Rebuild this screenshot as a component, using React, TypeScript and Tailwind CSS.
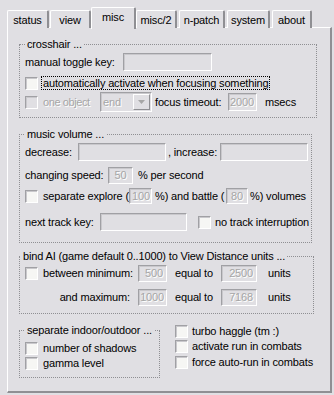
import React from 'react'

type BoxProps = { className?: string; value?: string }

// sunken, disabled-looking edit box
const Edit = ({ className = '', value = '' }: BoxProps) => (
  <div
    className={`shrink-0 border border-t-[#a0a0a4] border-l-[#a0a0a4] border-r-white border-b-white shadow-[inset_1px_1px_0_#c9c8cc] bg-[#e0dfe3] flex items-center ${className}`}
  >
    <span className="w-full text-[#a6a6a6] [text-shadow:1px_1px_0_#fff]">{value}</span>
  </div>
)

const Check = ({ disabled = false }: { disabled?: boolean }) => (
  <div
    className={`shrink-0 w-[13px] h-[13px] border border-t-[#a0a0a4] border-l-[#a0a0a4] border-r-white border-b-white shadow-[inset_1px_1px_0_#c9c8cc] ${disabled ? 'bg-[#e0dfe3]' : 'bg-[#f6f6f4]'}`}
  />
)

const Combo = () => (
  <div className="shrink-0 w-[52px] h-[20px] border border-t-[#a0a0a4] border-l-[#a0a0a4] border-r-white border-b-white shadow-[inset_1px_1px_0_#c9c8cc] flex items-center justify-between pl-[2px] pr-[1px]">
    <span className="text-[#a6a6a6] [text-shadow:1px_1px_0_#fff]">end</span>
    <div className="w-[17px] h-[16px] border border-t-white border-l-white border-r-[#8f8f93] border-b-[#8f8f93] bg-[#e0dfe3] flex items-center justify-center">
      <svg width="7" height="4" viewBox="0 0 7 4">
        <path d="M0 0h7L3.5 4z" fill="#a6a6a6" />
      </svg>
    </div>
  </div>
)

const tabs = [
  { label: 'status', cls: 'ml-[7px] w-[42px]' },
  { label: 'view', cls: 'ml-[1px] w-[41px]' },
  { label: 'misc', cls: 'w-[45px]', active: true },
  { label: 'misc/2', cls: 'w-[41px]' },
  { label: 'n-patch', cls: 'ml-[2px] w-[46px]' },
  { label: 'system', cls: 'ml-[2px] w-[43px]' },
  { label: 'about', cls: 'ml-[2px] w-[40px]' },
]

const Legend = ({ children, className = '' }: { children: React.ReactNode; className?: string }) => (
  <legend className={`px-[2px] leading-[13px] ${className}`}>{children}</legend>
)

export default function App() {
  return (
    <div className="w-[334px] h-[395px] overflow-hidden whitespace-nowrap bg-[#e0dfe3] pt-[7px] text-[11px] leading-[13px] tracking-[-0.15px] text-black font-['Liberation_Sans',Arial,sans-serif]">
      {/* tab strip */}
      <div className="flex items-end h-[21px]">
        {tabs.map((t) =>
          t.active ? (
            <div
              key={t.label}
              className={`relative z-10 h-[22px] -mb-px bg-[#e0dfe3] border-t border-l border-white border-r-2 border-r-[#8f8f93] rounded-t-[2px] flex justify-center pt-[3px] ${t.cls}`}
            >
              {t.label}
            </div>
          ) : (
            <div
              key={t.label}
              className={`h-[18px] bg-[#e0dfe3] border-t border-l border-white border-r-2 border-r-[#8f8f93] rounded-t-[2px] flex justify-center pt-[3px] ${t.cls}`}
            >
              {t.label}
            </div>
          )
        )}
      </div>

      {/* page */}
      <div className="ml-[7px] -mt-px w-[325px] h-[366px] border-t border-l border-white border-r-2 border-b-2 border-r-[#8f8f93] border-b-[#8f8f93] pl-[11px]">
        {/* crosshair */}
        <fieldset className="mt-[10px] w-[298px] border border-dotted border-[#8f8f93] pl-[5px] pb-[5px]">
          <Legend>crosshair ...</Legend>
          <div className="flex items-center h-[18px] mt-[2px]">
            <span className="shrink-0 w-[98px]">manual toggle key:</span>
            <Edit className="w-[89px] h-[18px]" />
          </div>
          <div className="flex items-center h-[14px] mt-[5px]">
            <Check />
            <span className="ml-[3px] h-[14px] border border-dotted border-black px-[1px] leading-[12px]">
              automatically activate when focusing something
            </span>
          </div>
          <div className="flex items-center h-[20px] mt-[2px]">
            <Check disabled />
            <span className="shrink-0 ml-[5px] w-[57px] tracking-[-0.4px] text-[#a6a6a6] [text-shadow:1px_1px_0_#fff]">one object</span>
            <Combo />
            <span className="shrink-0 ml-[3px] w-[73px]">focus timeout:</span>
            <Edit className="w-[29px] h-[18px] pl-[1px]" value="2000" />
            <span className="ml-[8px]">msecs</span>
          </div>
        </fieldset>

        {/* music volume */}
        <fieldset className="mt-[10px] w-[293px] border border-dotted border-[#8f8f93] pl-[5px] pb-[11px]">
          <Legend>music volume ...</Legend>
          <div className="flex items-center h-[18px] mt-[2px]">
            <span className="shrink-0 w-[53px]">decrease:</span>
            <Edit className="w-[88px] h-[18px]" />
            <span className="shrink-0 w-[54px] pl-[2px]">, increase:</span>
            <Edit className="w-[88px] h-[18px]" />
          </div>
          <div className="flex items-center h-[17px] mt-[6px]">
            <span className="shrink-0 w-[83px]">changing speed:</span>
            <Edit className="w-[25px] h-[17px] text-center" value="50" />
            <span className="ml-[5px]">% per second</span>
          </div>
          <div className="flex items-center h-[16px] mt-[4px]">
            <Check />
            <span className="shrink-0 ml-[5px] w-[86px]">separate explore (</span>
            <Edit className="w-[23px] h-[16px] text-right pr-[1px]" value="100" />
            <span className="shrink-0 w-[74px] pl-[3px]">%) and battle (</span>
            <Edit className="w-[22px] h-[16px] text-center" value="80" />
            <span className="pl-[2px]">%) volumes</span>
          </div>
          <div className="flex items-center h-[18px] mt-[9px]">
            <span className="shrink-0 w-[75px]">next track key:</span>
            <Edit className="w-[87px] h-[18px]" />
            <div className="ml-[11px]">
              <Check />
            </div>
            <span className="ml-[4px]">no track interruption</span>
          </div>
        </fieldset>

        {/* bind AI */}
        <fieldset className="mt-[7px] w-[295px] border border-dotted border-[#8f8f93] pl-[5px] pb-[7px]">
          <Legend className="-ml-[4px] px-[1px]">bind AI (game default 0..1000) to View Distance units ...</Legend>
          <div className="flex items-center h-[17px] mt-[2px]">
            <Check />
            <span className="shrink-0 ml-[5px] w-[95px]">between minimum:</span>
            <Edit className="w-[29px] h-[17px] text-right pr-[3px]" value="500" />
            <span className="shrink-0 ml-[8px] w-[46px]">equal to</span>
            <Edit className="w-[36px] h-[17px] text-right pr-[3px]" value="2500" />
            <span className="ml-[11px]">units</span>
          </div>
          <div className="flex items-center h-[17px] mt-[7px]">
            <span className="shrink-0 w-[113px] text-right pr-[8px]">and maximum:</span>
            <Edit className="w-[29px] h-[17px] text-right pr-[2px]" value="1000" />
            <span className="shrink-0 ml-[8px] w-[46px]">equal to</span>
            <Edit className="w-[36px] h-[17px] text-right pr-[3px]" value="7168" />
            <span className="ml-[11px]">units</span>
          </div>
        </fieldset>

        {/* bottom */}
        <div className="mt-[10px] flex items-start">
          <fieldset className="shrink-0 w-[141px] border border-dotted border-[#8f8f93] pl-[5px] pb-[7px]">
            <Legend>separate indoor/outdoor ...</Legend>
            <div className="flex items-center h-[14px] mt-[4px]">
              <Check />
              <span className="ml-[5px]">number of shadows</span>
            </div>
            <div className="flex items-center h-[14px] mt-[1px]">
              <Check />
              <span className="ml-[5px]">gamma level</span>
            </div>
          </fieldset>
          <div className="ml-[15px] flex flex-col">
            <div className="flex items-center h-[14px]">
              <Check />
              <span className="ml-[4px]">turbo haggle (tm :)</span>
            </div>
            <div className="flex items-center h-[14px] mt-[1px]">
              <Check />
              <span className="ml-[4px]">activate run in combats</span>
            </div>
            <div className="flex items-center h-[14px] mt-[2px]">
              <Check />
              <span className="ml-[4px]">force auto-run in combats</span>
            </div>
          </div>
        </div>
      </div>
    </div>
  )
}
